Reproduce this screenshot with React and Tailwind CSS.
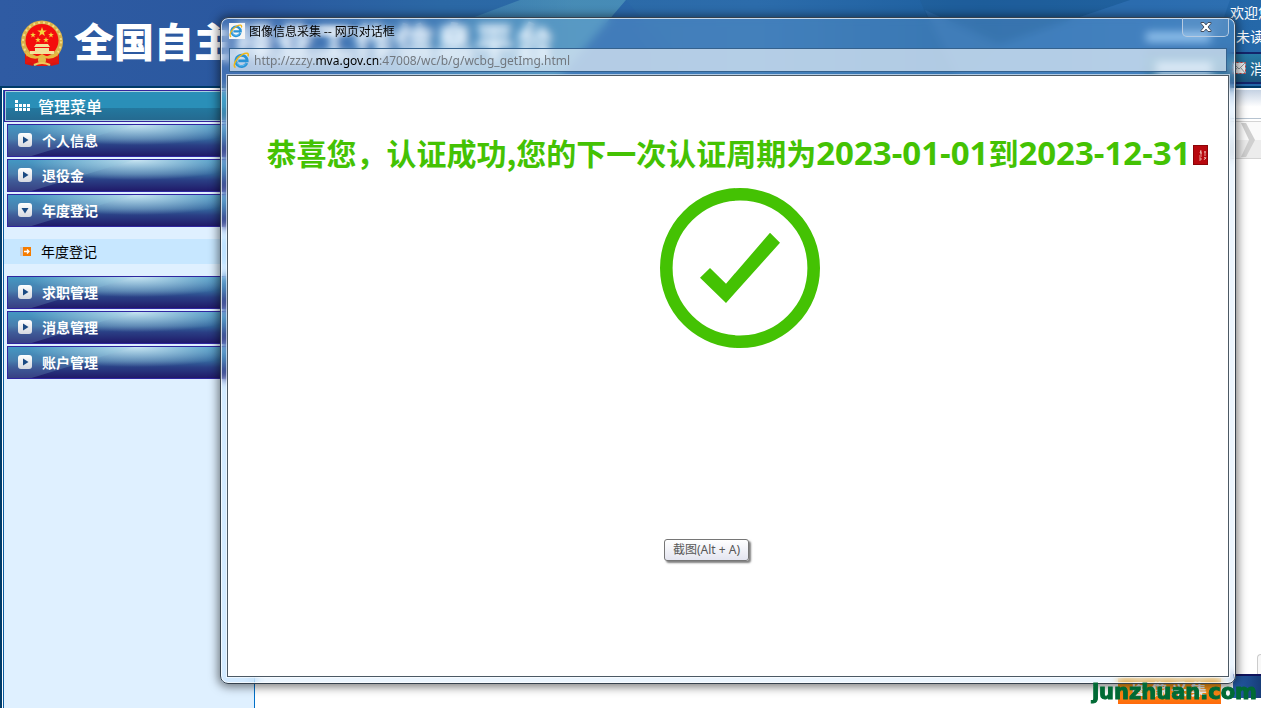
import { MdPlayArrow } from 'react-icons/md';

const menuTop = ['个人信息', '退役金'];
const menuBottom = ['求职管理', '消息管理', '账户管理'];

function Emblem() {
  const star = 'M0 -5 L1.2 -1.6 L4.8 -1.5 L1.9 0.6 L2.9 4 L0 2 L-2.9 4 L-1.9 0.6 L-4.8 -1.5 L-1.2 -1.6 Z';
  return (
    <svg width="44" height="48" viewBox="0 0 44 48" className="shrink-0" aria-hidden="true">
      <path d="M5 33 L5 44 L13 46 L16 41 L28 41 L31 46 L39 44 L39 33 Z" fill="#d8150f" />
      <circle cx="22" cy="21.5" r="21" fill="#d9b24a" />
      <circle cx="22" cy="21.5" r="19" fill="none" stroke="#f3dd86" strokeWidth="2" strokeDasharray="2 3" />
      <circle cx="22" cy="20.5" r="16.5" fill="#f40d0d" />
      <path d={star} transform="translate(22 12)" fill="#f5d33c" />
      <path d={star} transform="translate(13 15) scale(.6)" fill="#f5d33c" />
      <path d={star} transform="translate(31 15) scale(.6)" fill="#f5d33c" />
      <path d={star} transform="translate(18 20) scale(.6)" fill="#f5d33c" />
      <path d={star} transform="translate(26 20) scale(.6)" fill="#f5d33c" />
      <path d="M16 24 H28 L30 27 H14 Z M15 28 H29 V31 H15 Z M10 31 H34 V34 H10 Z" fill="#f2e19a" />
      <path d="M6 31 Q12 38 18 36 L22 34 L26 36 Q32 38 38 31 L37 38 Q31 43 25 40 L22 38 L19 40 Q13 43 7 38 Z" fill="#e9b93b" />
      <path d="M7 36 Q14 41 22 37 Q30 41 37 36 L39 43 Q32 41 27 46 L17 46 Q12 41 5 43 Z" fill="#e3170f" />
      <circle cx="22" cy="40" r="4" fill="#e2bb4b" />
      <path d="M14 45 Q22 41 30 45" fill="none" stroke="#edc95c" strokeWidth="2" />
    </svg>
  );
}

function BrowserIcon({ size }) {
  return (
    <svg width={size} height={size} viewBox="0 0 18 18" className="shrink-0" aria-hidden="true">
      <path d="M14.6 11.6 A6 6 0 1 1 15 9.4 H5.6" fill="none" stroke="#2a93d6" strokeWidth="3" />
      <path d="M14 11.8 A5.4 5.4 0 0 1 4 11" fill="none" stroke="#63bdf0" strokeWidth="1" />
      <path d="M2.6 16.6 C-1 14 4 6 10 2.6 C14 0.4 17.4 1 15.8 4.6" fill="none" stroke="#f3b816" strokeWidth="1.6" />
    </svg>
  );
}

function HeaderBackdrop() {
  return (
    <svg className="absolute inset-0 h-full w-full" viewBox="0 0 1261 86" preserveAspectRatio="none" aria-hidden="true">
      <defs>
        <linearGradient id="sky" x1="0" x2="1" y1="0" y2="0">
          <stop offset="0" stopColor="#2f5ba3" />
          <stop offset=".2" stopColor="#2a589f" />
          <stop offset=".35" stopColor="#2b68a5" />
          <stop offset=".6" stopColor="#2c6cab" />
          <stop offset=".78" stopColor="#1d5f9f" />
          <stop offset="1" stopColor="#2568a9" />
        </linearGradient>
        <linearGradient id="ray" x1="0" x2="1" y1="0" y2="0">
          <stop offset="0" stopColor="#62adc4" stopOpacity=".05" />
          <stop offset=".8" stopColor="#62adc4" stopOpacity=".5" />
        </linearGradient>
      </defs>
      <rect width="1261" height="86" fill="url(#sky)" />
      <polygon points="520,0 626,0 552,86 360,86 440,30" fill="url(#ray)" />
      <polygon points="626,0 700,86 552,86" fill="#2860ac" opacity=".25" />
      <polygon points="920,0 1130,0 1000,44 955,86" fill="#1c5588" opacity=".2" />
      <polygon points="1130,0 1230,0 1200,86 960,86 925,10 1000,44" fill="#4182c6" opacity=".3" />
    </svg>
  );
}

function Header() {
  return (
    <header className="relative flex h-[86px] overflow-hidden">
      <HeaderBackdrop />
      <div className="relative flex flex-1 items-start pt-5 pl-5">
        <Emblem />
        <h1 className="-mt-1.5 ml-2.5 text-[40px] leading-[52px] font-black whitespace-nowrap text-white">
          全国自主择业工作信息平台
        </h1>
      </div>
      <div className="relative w-[115px] shrink-0 text-sm whitespace-nowrap text-white">
        <div className="flex h-[52px]">
          <div className="mt-8 h-2.5 w-16 shrink-0 bg-[#a5cff5]/80" />
          <div className="ml-5 leading-6">
            <p>欢迎您</p>
            <p className="pl-1.5">未读</p>
          </div>
        </div>
        <nav className="flex h-8 items-center border-y-2 border-[#14256b] bg-gradient-to-b from-[#267aa5] to-[#1c557e]">
          <span className="ml-2.5 h-3 w-14 shrink-0 bg-[#c9dcec]" />
          <a href="#messages" className="ml-5 flex items-center gap-1">
            <svg width="14" height="12" viewBox="0 0 14 12" aria-hidden="true">
              <rect x=".5" y=".5" width="13" height="11" fill="#eee" stroke="#d23c35" strokeDasharray="2 2" />
              <path d="M1 1 L7 7 L13 1 M1 11 L5 6 M13 11 L9 6" fill="none" stroke="#8b9399" />
            </svg>
            消息
          </a>
        </nav>
      </div>
    </header>
  );
}

function MenuButton({ label, open }) {
  return (
    <button
      aria-expanded={!!open}
      className="relative flex h-[33px] w-full items-center gap-2.5 overflow-hidden border border-[#2f26a0] bg-[linear-gradient(to_bottom,#2f8abb,#35689f_45%,#2a3f85_65%,#201a69)] pb-px pl-2.5 text-sm leading-5 font-bold text-white"
    >
      <span className="absolute inset-0 bg-[radial-gradient(ellipse_110px_20px_at_128px_0px,rgba(225,243,250,.85),transparent)]" />
      <svg className="absolute inset-0 h-full w-full" viewBox="0 0 246 31" preserveAspectRatio="none" aria-hidden="true">
        <path d="M0 0 H128 Q80 14 24 31 H0 Z" fill="#8fc7dd" opacity=".22" />
      </svg>
      <span className="relative flex h-3.5 w-3.5 items-center justify-center rounded-[3px] bg-gradient-to-b from-white to-[#d5d9e0] text-[#1b4a82]">
        <MdPlayArrow size={12} className={open ? 'rotate-90' : ''} />
      </span>
      <span className="relative">{label}</span>
    </button>
  );
}

function Sidebar() {
  return (
    <aside className="w-[251px] shrink-0 border-r border-[#0070c8] bg-[#dff0ff]">
      <div className="flex h-8 items-center gap-2 border border-[#35249c] bg-[linear-gradient(to_bottom,#2a8fb8_55%,#23789f_56%,#25698f)] pb-px pl-2.5 text-white inset-ring inset-ring-[#a9cfe0]">
        <svg width="15" height="11" viewBox="0 0 15 11" fill="#fff" aria-hidden="true">
          <path d="M0 0h3v3H0zM0 4h3v3H0zM4 4h3v3H4zM8 4h3v3H8zM12 4h3v3h-3zM0 8h3v3H0zM4 8h3v3H4zM8 8h3v3H8zM12 8h3v3h-3z" />
        </svg>
        <h2 className="text-base font-medium">管理菜单</h2>
      </div>
      <nav className="pt-0.5">
        <div className="flex flex-col gap-0.5 px-[3px]">
          {menuTop.map((label) => (
            <MenuButton key={label} label={label} />
          ))}
          <MenuButton label="年度登记" open />
        </div>
        <a href="#annual" className="my-3 flex h-[25px] items-center gap-2.5 bg-[#c7e7ff] pb-px pl-4 text-sm text-black">
          <svg width="11" height="9" viewBox="0 0 11 9" aria-hidden="true">
            <path d="M0 0h3v9H0z" fill="#c9cdd2" />
            <path d="M3 0h8v9H3z" fill="#f57c00" />
            <path d="M4 4.5h5M7 2.5l2 2-2 2" stroke="#fff" strokeWidth="1.3" fill="none" />
          </svg>
          年度登记
        </a>
        <div className="flex flex-col gap-0.5 px-[3px]">
          {menuBottom.map((label) => (
            <MenuButton key={label} label={label} />
          ))}
        </div>
      </nav>
    </aside>
  );
}

function MainPanel() {
  return (
    <main className="flex min-w-0 flex-1 flex-col bg-white">
      <div className="h-[29px] border-b border-[#b6c3d0] bg-gradient-to-b from-[#c5d2e3] to-white to-60%" />
      <div className="mt-0.5 flex h-[38px] justify-end border-y border-[#d4d4d4] bg-[linear-gradient(to_bottom,#fafafa_50%,#ececec_51%)]">
        <svg width="22" height="36" viewBox="0 0 22 36" aria-hidden="true">
          <path d="M2 1 H7 L16 18 L7 35 H2 L10 18 Z" fill="#cfcfcf" />
        </svg>
      </div>
      <div className="mt-auto flex justify-end">
        <div className="h-6 w-1 rounded-l border border-r-0 border-[#ccc] bg-[#f8f8f8]" />
      </div>
      <div className="-mt-1 flex h-[34px] justify-end">
        <button className="mt-1 mr-3 h-[26px] w-[103px] bg-gradient-to-b from-[#f3a51b] to-[#ff6a0c] pb-1.5 text-base leading-5 font-bold text-[#eee]">
          图 像 采 集
        </button>
        <div className="h-6 w-[28px] border-t-2 border-[#10135c] bg-gradient-to-r from-[#255fac] to-[#173d78]" />
      </div>
    </main>
  );
}

function Dialog() {
  return (
    <section
      role="dialog"
      aria-labelledby="dialog-title"
      className="absolute top-[17px] right-[25px] bottom-6 left-[220px] flex flex-col rounded-lg border border-[#35414d] bg-[#9fd0ff]/20 px-1.5 pb-1.5 shadow-[0_1px_10px_2px_rgba(0,0,0,.5)] inset-ring inset-ring-white/70 backdrop-blur-xs"
    >
      <div className="flex h-[30px] shrink-0 items-start justify-between pl-0.5">
        <div className="flex h-[26px] items-center gap-1">
          <span className="flex h-4 w-4 items-center bg-[#f6f6f6]">
            <BrowserIcon size={14} />
          </span>
          <h2 id="dialog-title" className="bg-[radial-gradient(ellipse_closest-side,rgba(255,255,255,.4)_40%,transparent)] text-xs text-black">
            图像信息采集 -- 网页对话框
          </h2>
        </div>
        <button
          aria-label="关闭"
          className="flex h-[19px] w-[47px] items-center justify-center rounded-b-[5px] border border-t-0 border-[#b7cbe1] bg-white/10"
        >
          <svg width="12" height="10" viewBox="0 0 12 10" aria-hidden="true">
            <path
              d="M1 .5h3l2 2.4L8 .5h3v1L8 5l3 3.5v1H8L6 7.1 4 9.5H1v-1L4 5 1 1.5Z"
              fill="#fff"
              stroke="#454d5c"
            />
          </svg>
        </button>
      </div>
      <div className="mx-0.5 flex h-6 shrink-0 items-center gap-1 border border-[#35628e] bg-[#e6eff8]/70 pl-[3px]">
        <BrowserIcon size={17} />
        <p className="pt-px font-['Noto_Sans','Noto_Sans_CJK_SC',sans-serif] text-xs text-[#72787f]">
          http://zzzy.<span className="text-black">mva.gov.cn</span>:47008/wc/b/g/wcbg_getImg.html
        </p>
      </div>
      <div className="relative mt-[3px] flex min-h-0 flex-1 flex-col items-center border border-[#4c5964] bg-white pt-14 pl-6 outline outline-white/60">
        <h3 className="mr-1.5 flex items-center text-3xl leading-10 font-bold whitespace-nowrap text-[#44c203]">
          <span>
            恭喜您，认证成功,您的下一次认证周期为
            <Digits>2023-01-01</Digits>到<Digits>2023-12-31</Digits>
          </span>
          <svg width="15" height="20" viewBox="0 0 15 20" className="mt-1 ml-0.5" aria-hidden="true">
            <rect width="15" height="20" fill="#b8080e" />
            <rect x=".5" y=".5" width="14" height="19" fill="none" stroke="#8c0508" />
            <path
              d="M8 5l-1 3h2M8 6v4M6 11h3M6 13h2v2H6M11 7h2M12 6v3M11 10h2M11 12l2 2M13 12l-2 3"
              fill="none"
              stroke="#f0c9bd"
              strokeWidth=".8"
            />
          </svg>
        </h3>
        <svg width="160" height="160" viewBox="0 0 160 160" className="mt-[15px] shrink-0" role="img" aria-label="认证成功">
          <circle cx="80" cy="80" r="73.7" fill="none" stroke="#44c203" strokeWidth="12.6" />
          <path d="M40 89.7 L50 80 L66 95.7 L110 44.7 L120 54.7 L66 115 Z" fill="#44c203" />
        </svg>
        <div
          role="tooltip"
          className="absolute top-[463px] left-[436px] flex h-[22px] min-w-[85px] items-center justify-center rounded-[3px] border border-[#767676] bg-gradient-to-b from-white to-[#e4e5f0] px-1 font-['Noto_Sans','Noto_Sans_CJK_SC',sans-serif] text-xs whitespace-nowrap text-[#575757] shadow-[2px_2px_2px_rgba(0,0,0,.5)]"
        >
          截图(Alt + A)
        </div>
      </div>
    </section>
  );
}

function Digits({ children }) {
  return <span className="font-['Open_Sans',sans-serif] text-[33px]">{children}</span>;
}

export default function App() {
  return (
    <div className="relative flex h-screen flex-col overflow-hidden bg-white font-['Noto_Sans_CJK_SC',sans-serif]">
      <Header />
      <div className="flex min-h-0 flex-1 border-t-2 border-l-2 border-[#003a68]">
        <div className="flex min-w-0 flex-1 border-t border-l border-white pt-px">
          <div className="flex min-w-0 flex-1 border-l border-[#0a5ca0]">
            <Sidebar />
            <MainPanel />
          </div>
        </div>
      </div>
      <Dialog />
      <p className="absolute right-1 bottom-1 font-['DejaVu_Sans',sans-serif] text-[21px] leading-6 font-bold text-[#006a35] [-webkit-text-stroke:1px_#006a35]">
        junzhuan.com
      </p>
    </div>
  );
}
